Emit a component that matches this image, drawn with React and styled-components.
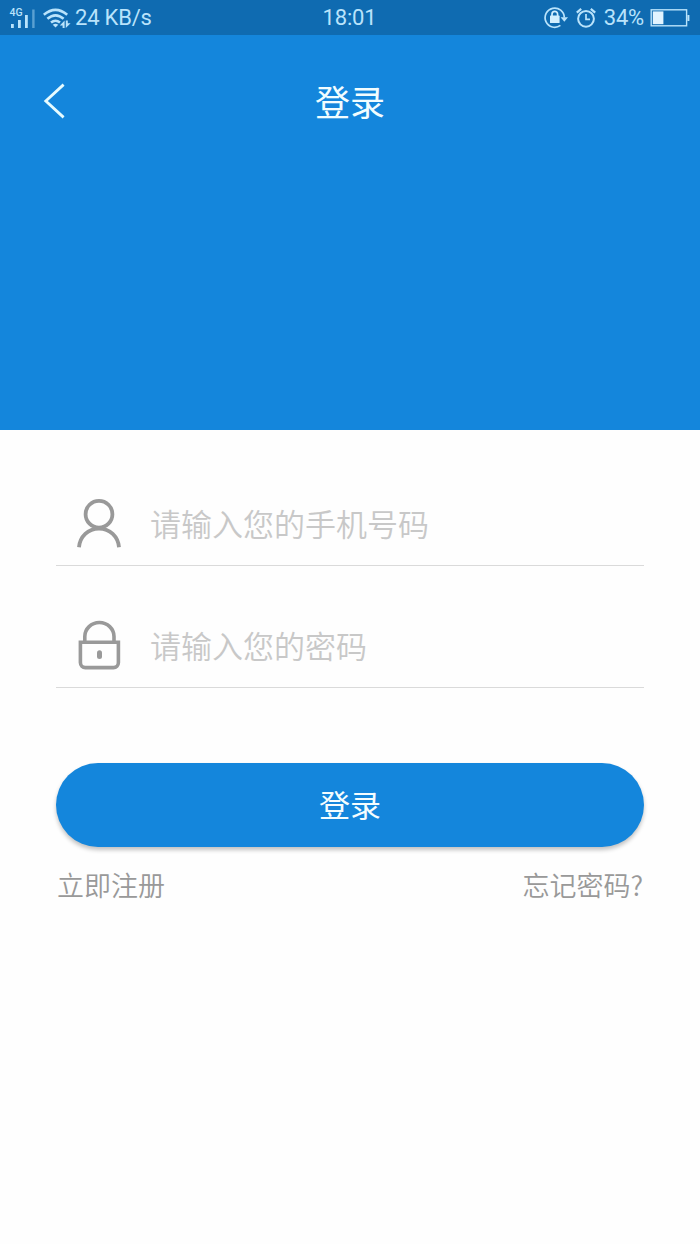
import React from "react";
import styled, { createGlobalStyle } from "styled-components";

function App() {
  return (
    <Page>
      <GlobalStyle />
      <StatusBar>
        <StatusSide>
          <SignalIcon />
          <WifiIcon />
          <Speed>24 KB/s</Speed>
        </StatusSide>
        <Clock>18:01</Clock>
        <StatusSide $end>
          <RotateLockIcon />
          <AlarmIcon />
          <Percent>34%</Percent>
          <BatteryIcon />
        </StatusSide>
      </StatusBar>
      <Hero>
        <TitleBar>
          <BackButton type="button" aria-label="返回">
            <svg width="24" height="38" viewBox="0 0 24 38" fill="none">
              <path d="M21.6 2.6 3.8 19 21.6 35.4" stroke="#e6fbff" strokeWidth="2.8" />
            </svg>
          </BackButton>
          <Title>登录</Title>
        </TitleBar>
      </Hero>
      <Form onSubmit={(e) => e.preventDefault()}>
        <Field $height={136}>
          <UserIcon />
          <Input type="tel" placeholder="请输入您的手机号码" />
        </Field>
        <Field $height={122}>
          <LockIcon />
          <Input type="password" placeholder="请输入您的密码" />
        </Field>
        <SubmitButton type="submit">登录</SubmitButton>
        <Links>
          <TextLink href="#register">立即注册</TextLink>
          <TextLink href="#forgot">忘记密码?</TextLink>
        </Links>
      </Form>
    </Page>
  );
}

function SignalIcon() {
  return (
    <svg width="26" height="22" viewBox="0 0 26 22">
      <Network x="0.5" y="9">
        4G
      </Network>
      <g fill="#b9e3fb">
        <rect x="2" y="17" width="2.8" height="4" />
        <rect x="9" y="13" width="2.8" height="8" />
        <rect x="16" y="8" width="2.8" height="13" />
        <rect x="23.2" y="2.5" width="2.4" height="18.5" opacity="0.45" />
      </g>
    </svg>
  );
}

function WifiIcon() {
  return (
    <svg width="28" height="22" viewBox="0 0 28 22" fill="none">
      <g stroke="#b9e3fb" strokeWidth="2.6">
        <path d="M0.8 7.8Q12.5-2.2 24.2 7.8" />
        <path d="M4.4 11.8Q12.5 4.9 20.6 11.8" />
        <path d="M8 15.6Q12.5 11.9 17 15.6" />
      </g>
      <path d="M9.7 17.8Q12.5 15.8 15.3 17.8L12.5 20.6Z" fill="#b9e3fb" />
      <path
        d="M21.6 13.5V21H19.6V18.4H16.8L21.6 13.5ZM22.8 21V13.5H24.8V16.2H27.6L22.8 21Z"
        fill="#b9e3fb"
      />
    </svg>
  );
}

function RotateLockIcon() {
  return (
    <svg width="24" height="22" viewBox="0 0 24 22" fill="none">
      <path d="M16.4 18.4A9.6 9.6 0 1 1 20.3 10.6" stroke="#b9e3fb" strokeWidth="1.7" />
      <path d="M16.6 10.2H24L20.3 14.8Z" fill="#b9e3fb" />
      <rect x="6" y="8.6" width="9.6" height="7.4" rx="0.6" fill="#d2efff" />
      <path d="M8 9.2V7.2a2.8 2.8 0 0 1 5.6 0V9.2" stroke="#d2efff" strokeWidth="1.7" />
    </svg>
  );
}

function AlarmIcon() {
  return (
    <svg width="20" height="22" viewBox="0 0 20 22" fill="none" stroke="#b9e3fb">
      <circle cx="10" cy="11.8" r="7.9" strokeWidth="2" />
      <path d="M10 7V12.4H14" strokeWidth="1.7" />
      <path d="M0.8 5.7 5.2 1.9M14.8 1.9 19.2 5.7" strokeWidth="2.2" />
    </svg>
  );
}

function BatteryIcon() {
  return (
    <svg width="40" height="18" viewBox="0 0 40 18">
      <rect x="1.2" y="0.8" width="35.4" height="16" fill="none" stroke="#b9e3fb" strokeWidth="1.4" />
      <rect x="2.8" y="2.4" width="10.6" height="12.8" fill="#e2f4ff" />
      <rect x="37.4" y="6" width="2" height="6" fill="#b9e3fb" />
    </svg>
  );
}

function UserIcon() {
  return (
    <svg width="46" height="50" viewBox="0 0 46 50" fill="none" stroke="#999" strokeWidth="3.8">
      <circle cx="23" cy="16.2" r="13.4" />
      <path d="M3 49.2C4 38.6 12 30.6 23 30.6S42 38.6 43 49.2" />
    </svg>
  );
}

function LockIcon() {
  return (
    <svg width="46" height="50" viewBox="0 0 46 50" fill="none" stroke="#999" strokeWidth="3.6">
      <path d="M8.8 21V16.5a14.6 14 0 0 1 29.2 0V21" />
      <path d="M4.4 22.2H42.4V42.6a5 5 0 0 1-5 5H9.4a5 5 0 0 1-5-5Z" />
      <path d="M23.5 32.8V36.4" strokeWidth="5" strokeLinecap="round" />
    </svg>
  );
}

const GlobalStyle = createGlobalStyle`
  * {
    box-sizing: border-box;
  }
  body {
    margin: 0;
    background: #fefefe;
    font-family: "Noto Sans CJK SC", sans-serif;
  }
  svg {
    display: block;
    flex-shrink: 0;
  }
`;

const Page = styled.div`
  width: 100%;
  min-height: 1244px;
`;

const StatusBar = styled.div`
  display: grid;
  grid-template-columns: 1fr auto 1fr;
  align-items: center;
  height: 35px;
  padding: 0 10px 0 9px;
  background: #0f6bb1;
  color: #b9e3fb;
  font-family: Roboto, sans-serif;
  font-size: 22px;
  line-height: 36px;
`;

const StatusSide = styled.div`
  display: flex;
  align-items: center;
  justify-content: ${(props) => (props.$end ? "flex-end" : "flex-start")};
  gap: 8px;
`;

const Speed = styled.span`
  margin-left: -4px;
  letter-spacing: -0.2px;
`;

const Clock = styled.span`
  letter-spacing: -0.2px;
`;

const Percent = styled.span`
  margin-right: -2px;
  letter-spacing: -0.2px;
`;

const Network = styled.text`
  font-family: Roboto, sans-serif;
  font-size: 10.5px;
  font-weight: 500;
  fill: #b9e3fb;
`;

const Hero = styled.header`
  height: 395px;
  padding-top: 21px;
  background: #1486dc;
`;

const TitleBar = styled.div`
  display: grid;
  grid-template-columns: 1fr auto 1fr;
  align-items: center;
  height: 90px;
  padding: 0 42px;
`;

const BackButton = styled.button`
  justify-self: start;
  padding: 0;
  border: 0;
  background: none;
  cursor: pointer;
`;

const Title = styled.h1`
  margin: 0;
  color: #f2fdff;
  font-size: 35px;
  font-weight: 400;
  line-height: 88px;
`;

const Form = styled.form`
  padding: 0 56px;
`;

const Field = styled.label`
  display: flex;
  align-items: flex-end;
  gap: 28px;
  height: ${(props) => props.$height}px;
  padding: 0 0 17px 20px;
  border-bottom: 1px solid #dadada;
`;

const Input = styled.input`
  flex: 1;
  min-width: 0;
  height: 50px;
  padding: 0 0 2px;
  border: 0;
  outline: 0;
  background: transparent;
  color: #555;
  font-family: inherit;
  font-size: 31px;
  font-weight: 350;
  &::placeholder {
    color: #c8c8c8;
    opacity: 1;
  }
`;

const SubmitButton = styled.button`
  display: block;
  width: 100%;
  height: 84px;
  margin-top: 75px;
  padding: 0 0 3px;
  border: 0;
  border-radius: 42px;
  background: #1486dc;
  box-shadow: 0 3px 4px rgba(0, 0, 0, 0.24);
  color: #f4fdff;
  font-family: inherit;
  font-size: 31px;
  cursor: pointer;
`;

const Links = styled.div`
  display: flex;
  justify-content: space-between;
  margin-top: 18px;
  padding: 0 1px;
`;

const TextLink = styled.a`
  color: #999;
  font-size: 27px;
  font-weight: 350;
  line-height: 40px;
  text-decoration: none;
`;

export default App;
